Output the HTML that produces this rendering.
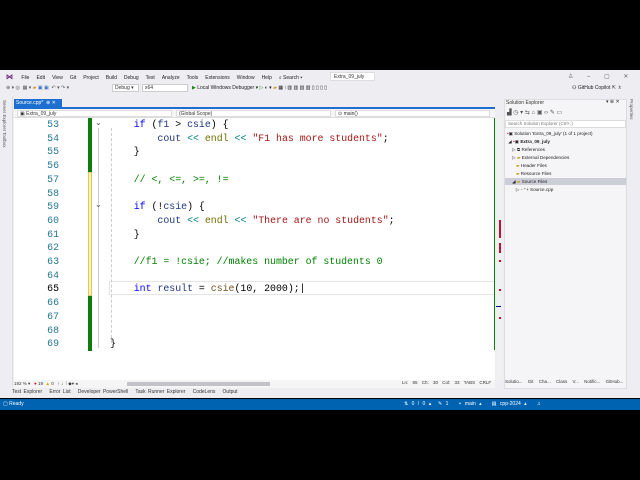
<!DOCTYPE html>
<html><head><meta charset="utf-8"><style>
*{margin:0;padding:0;box-sizing:border-box}
body{width:640px;height:480px;background:#000;position:relative;overflow:hidden;font-family:"Liberation Sans",sans-serif;font-size:5px;color:#333}
.a{position:absolute}
.code{font-family:"Liberation Mono",monospace;font-size:9.9px;white-space:pre;position:absolute;left:0;line-height:13.7px}
.k{color:#0000ff}.c{color:#008000}.s{color:#a31515}.o{color:#008080}.f{color:#74531f}.v{color:#1f377f}
.m span{margin-right:7px}
</style></head><body>
<div class="a" style="left:0;top:70px;width:640px;height:328px;background:#eeeef2"></div>
<div class="a m" style="left:6px;top:73px;font-size:5px;color:#222;white-space:nowrap">
<span style="color:#68217a;font-weight:bold;font-size:7px">⋈</span>
<span>File</span><span>Edit</span><span>View</span><span>Git</span><span>Project</span><span>Build</span><span>Debug</span><span>Test</span><span>Analyze</span><span>Tools</span><span>Extensions</span><span>Window</span><span>Help</span><span>⌕ Search ▾</span></div>
<div class="a" style="left:330px;top:72px;width:45px;height:9px;background:#fff;border:1px solid #ddd;font-size:5px;padding:1px 3px">Extra_09_july</div>
<div class="a" style="left:568px;top:73px;font-size:6px;color:#666;word-spacing:12px">♙ – ▢ ✕</div>
<div class="a" style="left:6px;top:85px;font-size:5px;color:#555">⊕ ▾ ◎ &nbsp;▦ ▾ <span style="color:#c9a227">▰</span> <span style="color:#3a6fc4">▣ ▣</span> &nbsp;↶ ▾ ↷ ▾</div>
<div class="a" style="left:112px;top:84px;width:27px;height:8px;background:#fff;border:1px solid #ccc;font-size:5px;padding:0 2px">Debug ▾</div>
<div class="a" style="left:142px;top:84px;width:46px;height:8px;background:#fff;border:1px solid #ccc;font-size:5px;padding:0 2px">x64</div>
<div class="a" style="left:192px;top:85px;font-size:5px;color:#222"><span style="color:#1a8a1a">▶</span> Local Windows Debugger ▾ <span style="color:#1a8a1a">▷</span> ◐ ▾ <span style="color:#c9a227">▰</span> ▦ ⁝ ▥ ▥ ▥ ▥ ▯ ▯ ▯ ▯</div>
<div class="a" style="left:572px;top:85px;font-size:5px;color:#222"><b style="color:#555">⚇</b> GitHub Copilot ⇱ ♗</div>
<div class="a" style="left:0;top:96px;width:13px;height:290px;background:#eeeef2;border-right:1px solid #ddd"></div>
<div class="a" style="left:2px;top:100px;font-size:4.5px;color:#555;writing-mode:vertical-rl">Server Explorer</div>
<div class="a" style="left:2px;top:132px;font-size:4.5px;color:#555;writing-mode:vertical-rl">Toolbox</div>
<div class="a" style="left:14px;top:99px;width:48px;height:9px;background:#1c6fce;color:#fff;font-size:5px;padding:1px 2px">Source.cpp* &nbsp;⊕ ✕</div>
<div class="a" style="left:14px;top:107px;width:481px;height:2px;background:#1c6fce"></div>
<div class="a" style="left:14px;top:109px;width:481px;height:9px;background:#f5f5f5;border-bottom:1px solid #ddd"></div>
<div class="a" style="left:17px;top:110px;width:155px;height:7px;background:#fff;border:1px solid #ddd;font-size:5px;padding:0 2px">▣ Extra_09_july</div>
<div class="a" style="left:176px;top:110px;width:155px;height:7px;background:#fff;border:1px solid #ddd;font-size:5px;padding:0 2px">(Global Scope)</div>
<div class="a" style="left:335px;top:110px;width:155px;height:7px;background:#fff;border:1px solid #ddd;font-size:5px;padding:0 2px">⊙ main()</div>
<div class="a" style="left:14px;top:118px;width:481px;height:262px;background:#fff"></div>
<div class="a" style="left:88px;top:118px;width:4px;height:54px;background:#107c10"></div>
<div class="a" style="left:88px;top:172px;width:4px;height:124px;background:#fff3a6;border:1px solid #d9c96a"></div>
<div class="a" style="left:88px;top:296px;width:4px;height:55px;background:#107c10"></div>
<div class="a" style="left:98px;top:128px;width:1px;height:220px;background:#ccc"></div>
<div class="a" style="left:95px;top:118px;font-size:8px;color:#555">⌄</div>
<div class="a" style="left:95px;top:200px;font-size:8px;color:#555">⌄</div>
<div class="a" style="left:109px;top:281px;width:386px;height:14px;border:1px solid #e4e4e4"></div>
<div class="a" style="left:111px;top:128px;width:1px;height:215px;border-left:1px dashed #ccc"></div>
<div class="a" style="left:0;top:118px;white-space:pre;font-family:'Liberation Mono',monospace;font-size:9.9px;line-height:13.7px;width:59px;text-align:right;color:#237893">53
54
55
56
57
58
59
60
61
62
63
64
<span style="color:#000">65</span>
66
67
68
69</div>
<div class="code" style="left:110px;top:118px;color:#000">    <span class="k">if</span> (<span class="v">f1</span> &gt; <span class="v">csie</span>) {
        <span class="v">cout</span> <span class="o">&lt;&lt;</span> <span style="color:#6f6f00">endl</span> <span class="o">&lt;&lt;</span> <span class="s">"F1 has more students"</span>;
    }

    <span class="c">// &lt;, &lt;=, &gt;=, !=</span>

    <span class="k">if</span> (!<span class="v">csie</span>) {
        <span class="v">cout</span> <span class="o">&lt;&lt;</span> <span style="color:#6f6f00">endl</span> <span class="o">&lt;&lt;</span> <span class="s">"There are no students"</span>;
    }

    <span class="c">//f1 = !csie; //makes number of students 0</span>

    <span class="k">int</span> <span class="v">result</span> = <span class="f">csie</span>(10, 2000);|



}</div>
<div class="a" style="left:494px;top:118px;width:1px;height:232px;background:#107c10"></div>
<div class="a" style="left:496px;top:118px;width:6px;height:262px;background:#f0f0f0"></div>
<div class="a" style="left:499px;top:220px;width:2px;height:18px;background:#c8102e"></div>
<div class="a" style="left:499px;top:243px;width:2px;height:10px;background:#c8102e"></div>
<div class="a" style="left:499px;top:260px;width:2px;height:2px;background:#c8102e"></div>
<div class="a" style="left:499px;top:289px;width:2px;height:2px;background:#c8102e"></div>
<div class="a" style="left:499px;top:317px;width:2px;height:2px;background:#c8102e"></div>
<div class="a" style="left:496px;top:306px;width:5px;height:1px;background:#00008b"></div>
<div class="a" style="left:14px;top:380px;width:481px;height:8px;background:#f5f5f5;font-size:4.5px;color:#333;padding:1px 0 0 0;white-space:nowrap">192 % ▾ &nbsp; <span style="color:#c8102e">●</span> 19 &nbsp;<span style="color:#d8a000">▲</span> 0 &nbsp; ↑ ↓ &nbsp;⁞ ◆▾ ◂</div>
<div class="a" style="left:127px;top:382px;width:143px;height:4px;background:#c2c3c9"></div>
<div class="a" style="left:402px;top:380px;font-size:4.5px;color:#333;word-spacing:3px">Ln: 65 Ch: 30 Col: 33 TABS CRLF</div>
<div class="a" style="left:12px;top:389px;font-size:5px;color:#333;word-spacing:1px;white-space:nowrap">Test Explorer &nbsp; Error List &nbsp; Developer PowerShell &nbsp; Task Runner Explorer &nbsp; CodeLens &nbsp; Output</div>
<div class="a" style="left:504px;top:99px;width:123px;height:290px;background:#f5f5f7;border:1px solid #ddd"></div>
<div class="a" style="left:506px;top:100px;font-size:5px;color:#333">Solution Explorer</div>
<div class="a" style="left:606px;top:99px;font-size:5px;color:#333">▾ ⊕ ✕</div>
<div class="a" style="left:507px;top:109px;font-size:6px;color:#555">▟ ◷ ▾ ⇆ ⌂ ▣ ‹› ✎ ▭</div>
<div class="a" style="left:505px;top:120px;width:121px;height:8px;background:#fff;border:1px solid #ddd;font-size:4.5px;color:#777;padding:0 2px">Search Solution Explorer (Ctrl+;)</div>
<div class="a" style="left:507px;top:130px;font-size:4.6px;color:#222;line-height:8px;white-space:pre"><span style="color:#c8102e">•</span>▣ Solution 'Extra_09_july' (1 of 1 project)
 ◢ <span style="color:#c8102e">•</span>▣ <b>Extra_09_july</b>
    ▷ ⧉ References
    ▷ <span style="color:#c9a227">▰</span> External Dependencies
       <span style="color:#c9a227">▰</span> Header Files
       <span style="color:#c9a227">▰</span> Resource Files</div>
<div class="a" style="left:505px;top:178px;width:121px;height:7px;background:#ccced7"></div>
<div class="a" style="left:507px;top:178px;font-size:4.6px;color:#222;line-height:8px;white-space:pre">    ◢ <span style="color:#c9a227">▰</span> Source Files
       ▷ ◦ ⁺+ Source.cpp</div>
<div class="a" style="left:505px;top:379px;font-size:4.5px;color:#333;white-space:nowrap;word-spacing:4px">Solutio... Git Cha... Class V... Notific... GitHub...</div>
<div class="a" style="left:629px;top:99px;font-size:4.5px;color:#555;writing-mode:vertical-rl">Properties</div>
<div class="a" style="left:0;top:399px;width:640px;height:11px;background:#0063b1;color:#fff;font-size:5px;padding:2px 3px;white-space:nowrap">▢ Ready</div>
<div class="a" style="left:404px;top:401px;color:#fff;font-size:5px;white-space:nowrap;word-spacing:2px">⇅ 0 / 0 ▴ &nbsp;✎ 1 &nbsp; ⑂ main ▴ &nbsp; ▤ cpp-2024 ▴ &nbsp; ♫</div>
</body></html>
